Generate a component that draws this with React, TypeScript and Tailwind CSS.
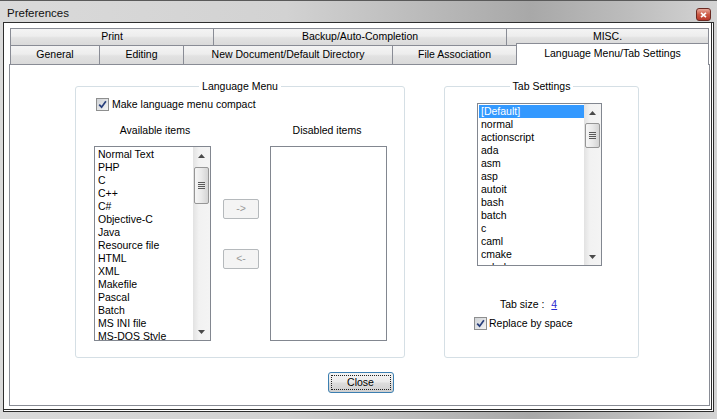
import React from 'react';

const AVAILABLE = [
  'Normal Text',
  'PHP',
  'C',
  'C++',
  'C#',
  'Objective-C',
  'Java',
  'Resource file',
  'HTML',
  'XML',
  'Makefile',
  'Pascal',
  'Batch',
  'MS INI file',
  'MS-DOS Style',
];

const TAB_LANGS = [
  '[Default]',
  'normal',
  'actionscript',
  'ada',
  'asm',
  'asp',
  'autoit',
  'bash',
  'batch',
  'c',
  'caml',
  'cmake',
  'cobol',
];

// --- small win7-ish widgets ---
const Arrow = ({ down = false }: { down?: boolean }) => (
  <div className="flex h-[17px] w-full shrink-0 items-center justify-center">
    <svg width="7" height="4" viewBox="0 0 7 4">
      <path d={down ? 'M0 0H7L3.5 4Z' : 'M3.5 0L7 4H0Z'} fill="#4a4a4a" />
    </svg>
  </div>
);

const ScrollBar = ({ thumbClass }: { thumbClass: string }) => (
  <div className="flex h-full w-[17px] shrink-0 flex-col bg-[linear-gradient(90deg,#e2e2e2,#f2f2f2_35%,#f4f4f4)]">
    <Arrow />
    <div className="flex-1 px-px">
      <div
        className={`flex flex-col items-center justify-center gap-px rounded-[2px] border border-[#969696] bg-[linear-gradient(90deg,#f6f6f6,#e9e9e9_50%,#d4d4d4)] ${thumbClass}`}
      >
        <div className="h-px w-[7px] bg-[#5a5a5a]" />
        <div className="h-px w-[7px] bg-[#5a5a5a]" />
        <div className="h-px w-[7px] bg-[#5a5a5a]" />
        <div className="h-px w-[7px] bg-[#5a5a5a]" />
      </div>
    </div>
    <Arrow down />
  </div>
);

const ListBox = ({
  items,
  selected = -1,
  className,
  thumbClass,
}: {
  items: string[];
  selected?: number;
  className: string;
  thumbClass: string;
}) => (
  <div className={`flex shrink-0 border border-[#828790] bg-white ${className}`}>
    <div className="flex-1 overflow-hidden pt-px pl-px">
      {items.map((it, i) => (
        <div
          key={it}
          className={`h-[13px] pl-[2px] leading-[13px] whitespace-nowrap ${
            i === selected ? 'bg-[#3399ff] text-white' : ''
          }`}
        >
          {it}
        </div>
      ))}
    </div>
    <ScrollBar thumbClass={thumbClass} />
  </div>
);

const CheckBox = () => (
  <div className="flex h-[13px] w-[13px] shrink-0 items-center justify-center border border-[#8e8f8f] bg-[linear-gradient(135deg,#cfd2d6,#f4f4f4)]">
    <svg width="9" height="9" viewBox="0 0 9 9">
      <path d="M1.2 4.6L3.6 7.2L7.9 1.2" stroke="#283f7c" strokeWidth="1.7" fill="none" />
    </svg>
  </div>
);

const Tab = ({ label, w, last = false }: { label: string; w: string; last?: boolean }) => (
  <div
    className={`flex h-full items-center justify-center border-t border-l border-[#898c95] bg-[linear-gradient(#f4f4f4,#ededed_45%,#e2e2e2_55%,#dadada)] ${w} ${
      last ? 'border-r' : ''
    }`}
  >
    {label}
  </div>
);

const GroupTitle = ({ title }: { title: string }) => (
  <div className="-mt-[7px] flex h-[13px] justify-center leading-[13px]">
    <span className="bg-white px-[3px]">{title}</span>
  </div>
);

const SmallButton = ({ label, className = '' }: { label: string; className?: string }) => (
  <div
    className={`flex h-[20px] w-[36px] items-center justify-center rounded-[2px] border border-[#b5b9bc] bg-[#f4f4f4] text-[#9a9a9a] ${className}`}
  >
    {label}
  </div>
);

export default function App() {
  return (
    <div className="flex h-[419px] w-[717px] flex-col overflow-hidden border-t border-[#5a5a5a] bg-[linear-gradient(90deg,#dadada,#d2d2d2_40%,#a8a8a8_74%,#bdbdbd_88%,#d4d4d4)] font-['Liberation_Sans',Arial,sans-serif] text-[10.5px] text-black">
      {/* title bar */}
      <div className="flex h-[21px] shrink-0 items-start justify-between pr-[6px] pl-[7px]">
        <span className="mt-[5px] text-[11.5px] leading-[14px] text-[#111]">Preferences</span>
        <div className="mt-[7px] flex h-[13px] w-[15px] items-center justify-center rounded-[3px] border border-[#6b2a22] bg-[linear-gradient(#e9a99b,#cc5a45_50%,#b9382a)]">
          <svg width="7" height="6" viewBox="0 0 7 6">
            <path d="M1 0.8L6 5.2M6 0.8L1 5.2" stroke="#fff" strokeWidth="1.6" />
          </svg>
        </div>
      </div>

      {/* client area */}
      <div className="ml-[3px] h-[390px] w-[711px] shrink-0 border border-[#2e2e2e] bg-white">
        <div className="mr-px mb-px h-[387px] border-r border-b border-[#2e2e2e] pt-[5px] pr-px pb-[3px] pl-[5px]">
          <div className="flex h-[378px] w-[701px] flex-col">
            {/* row 1 */}
            <div className="flex h-[17px] shrink-0 pl-px">
              <Tab label="Print" w="w-[203px]" />
              <Tab label="Backup/Auto-Completion" w="w-[293px]" />
              <Tab label="MISC." w="w-[203px]" last />
            </div>
            {/* row 2 */}
            <div className="flex h-[19px] shrink-0 items-end pl-px">
              <Tab label="General" w="w-[89px]" />
              <Tab label="Editing" w="w-[84px]" />
              <Tab label="New Document/Default Directory" w="w-[209px]" />
              <Tab label="File Association" w="w-[124px]" />
              <div className="relative z-10 -mb-px flex h-[22px] w-[193px] items-center justify-center border-x border-t border-[#898c95] bg-white pb-[2px]">
                Language Menu/Tab Settings
              </div>
            </div>

            {/* page */}
            <div className="flex flex-1 flex-col border border-[#898c95] bg-white">
              <div className="mt-[21px] ml-[65px] flex gap-[39px]">
                {/* Language Menu */}
                <div className="flex h-[272px] w-[330px] flex-col rounded-[3px] border border-[#d5dfe5]">
                  <GroupTitle title="Language Menu" />
                  <div className="mt-[5px] ml-[20px] flex h-[13px] items-center gap-[3px] leading-[13px]">
                    <CheckBox />
                    <span>Make language menu compact</span>
                  </div>
                  <div className="mt-[13px] ml-[18px] flex">
                    <div className="flex w-[117px] flex-col">
                      <div className="h-[13px] pl-[5px] text-center leading-[13px]">Available items</div>
                      <ListBox
                        items={AVAILABLE}
                        className="mt-[9px] h-[195px] w-[117px]"
                        thumbClass="mt-[3px] h-[37px]"
                      />
                    </div>
                    <div className="ml-[12px] flex flex-col pt-[75px]">
                      <SmallButton label="->" />
                      <SmallButton label="<-" className="mt-[30px]" />
                    </div>
                    <div className="ml-[11px] flex w-[117px] flex-col">
                      <div className="h-[13px] pr-[3px] text-center leading-[13px]">Disabled items</div>
                      <div className="mt-[9px] h-[195px] w-[117px] border border-[#828790] bg-white" />
                    </div>
                  </div>
                </div>

                {/* Tab Settings */}
                <div className="flex h-[272px] w-[195px] flex-col rounded-[3px] border border-[#d5dfe5]">
                  <GroupTitle title="Tab Settings" />
                  <ListBox
                    items={TAB_LANGS}
                    selected={0}
                    className="mt-[10px] ml-[32px] h-[163px] w-[125px]"
                    thumbClass="mt-[2px] h-[25px]"
                  />
                  <div className="mt-[32px] ml-[55px] flex h-[13px] items-center leading-[13px]">
                    <span>Tab size :</span>
                    <span className="ml-[7px] text-[#2b2bd0] underline">4</span>
                  </div>
                  <div className="mt-[6px] ml-[29px] flex h-[13px] items-center gap-[2px] leading-[13px]">
                    <CheckBox />
                    <span>Replace by space</span>
                  </div>
                </div>
              </div>

              {/* close */}
              <div className="mt-[14px] flex justify-center pl-[2px]">
                <div className="flex h-[21px] w-[66px] items-center justify-center rounded-[3px] border border-[#3c7fb1] bg-[linear-gradient(#f3f3f3,#ebebeb_45%,#dcdcdc_55%,#cfcfcf)] p-[2px]">
                  <div className="flex h-full w-full items-center justify-center border border-dotted border-[#222]">
                    Close
                  </div>
                </div>
              </div>
            </div>
          </div>
        </div>
      </div>
    </div>
  );
}
